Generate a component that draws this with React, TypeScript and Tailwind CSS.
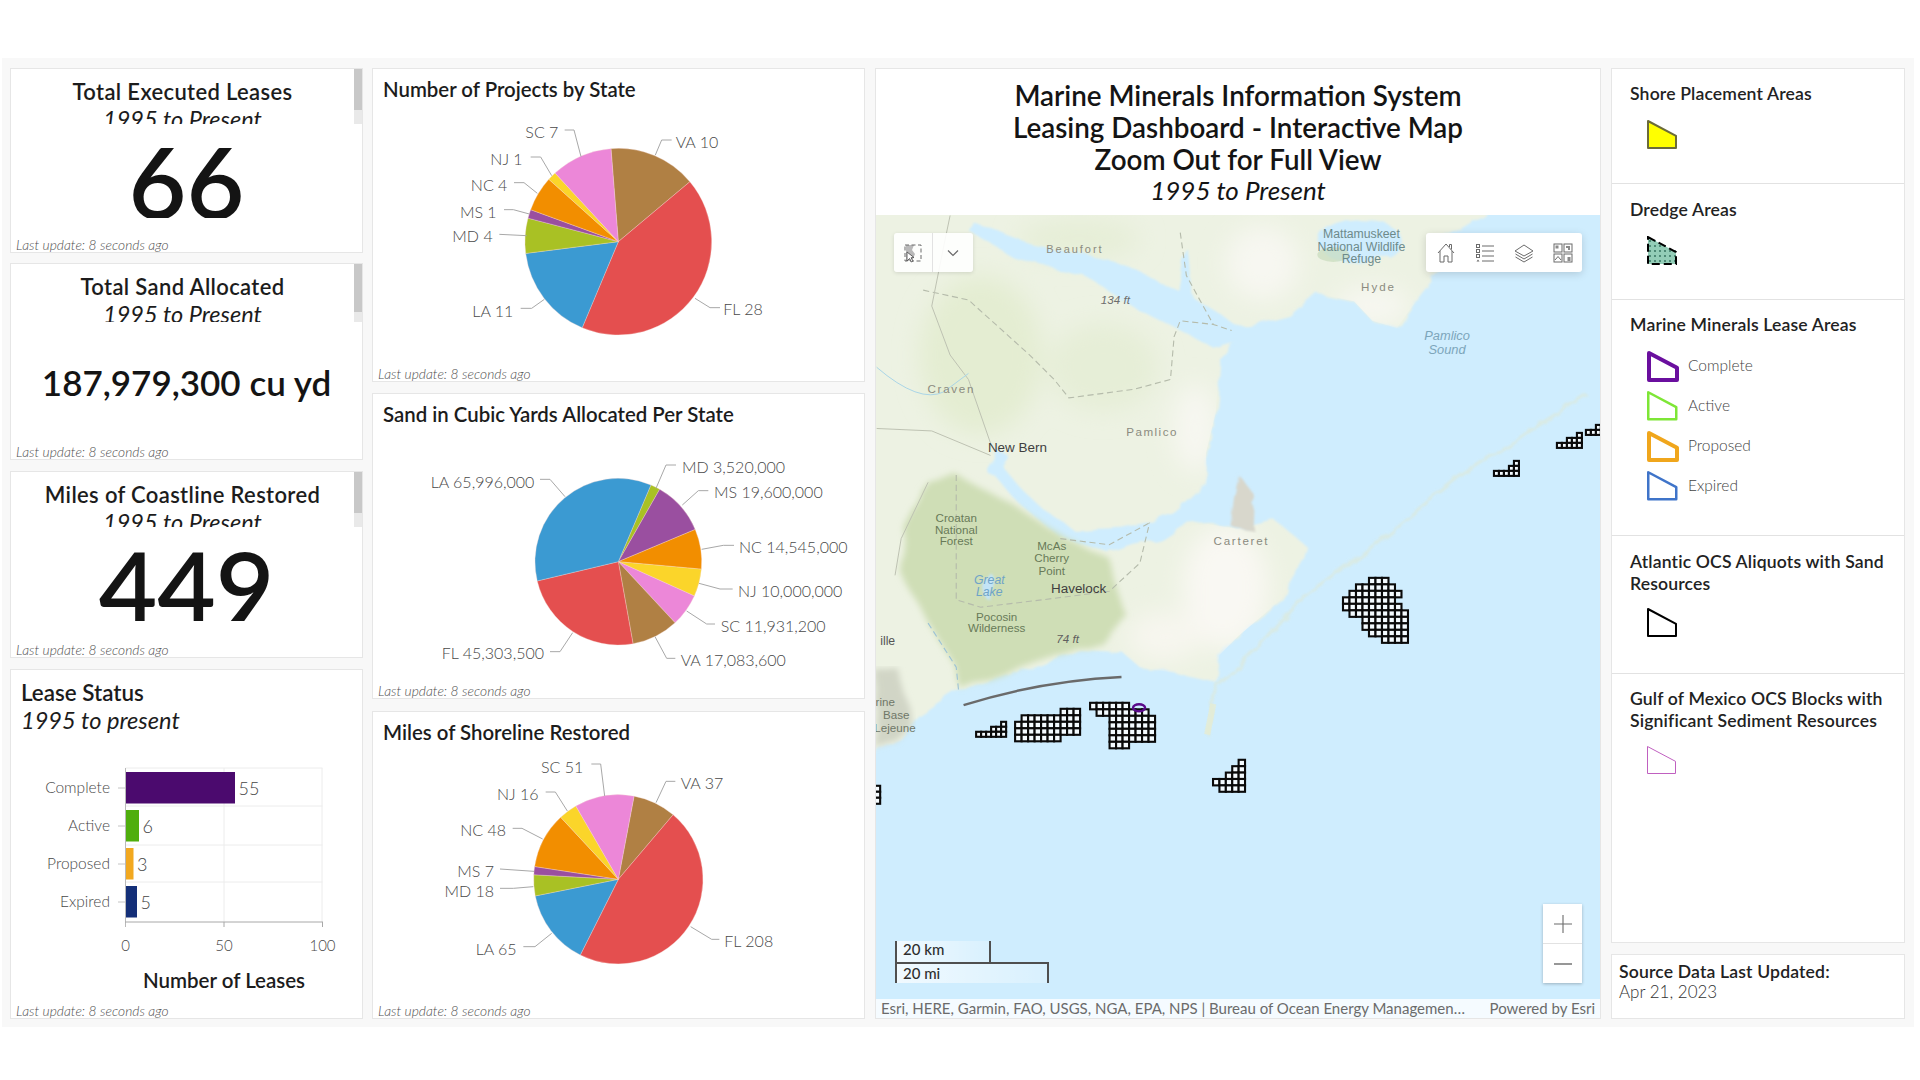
import React from "react";

type Slice = { v: number; c: string };
type Lbl = { t: string; x: number; y: number; a: "start" | "end"; p: string };

const C = { VA: "#b08044", FL: "#e44f4f", LA: "#3b9ad2", MD: "#a9c124", MS: "#9a4fa0", NC: "#f28e00", NJ: "#fbd52a", SC: "#ec87d8" };

function slicePaths(cx: number, cy: number, r: number, start: number, data: Slice[]) {
  const total = data.reduce((s, d) => s + d.v, 0);
  let a = start;
  return data.map((d, i) => {
    const b = a + (d.v / total) * 360;
    const p = (deg: number) => {
      const rad = (deg * Math.PI) / 180;
      return `${(cx + r * Math.sin(rad)).toFixed(1)} ${(cy - r * Math.cos(rad)).toFixed(1)}`;
    };
    const path = `M${cx} ${cy} L${p(a)} A${r} ${r} 0 ${b - a > 180 ? 1 : 0} 1 ${p(b)} Z`;
    a = b;
    return <path key={i} d={path} fill={d.c} stroke="#f7d9d0" strokeWidth="1" />;
  });
}

function Footer() {
  return <div className="h-[16px] pl-[5px] text-[13.8px] leading-[18px] italic font-light text-[#4f4f4f] shrink-0 whitespace-nowrap">Last update: 8 seconds ago</div>;
}

function PieCard({ title, h, svgH, vy, cx, cy, r, start, data, labels }: { title: string; h: string; svgH: number; vy: number; cx: number; cy: number; r: number; start: number; data: Slice[]; labels: Lbl[] }) {
  return (
    <div className={`${h} bg-white border border-[#e6e6e6] flex flex-col overflow-hidden`}>
      <div className="h-[40px] pl-[10px] flex items-center text-[20.4px] font-semibold text-[#1c1c1c] shrink-0 whitespace-nowrap">{title}</div>
      <svg width={491} height={svgH} viewBox={`9 ${vy} 1473 ${svgH * 3}`} className="block shrink-0">
        {slicePaths(cx, cy, r, start, data)}
        {labels.map((l, i) => (
          <g key={i}>
            <polyline points={l.p} fill="none" stroke="#a8a8a8" strokeWidth="3" />
            <text x={l.x} y={l.y + 16} textAnchor={l.a} fontSize="48" fill="#484848" fontWeight="300">{l.t}</text>
          </g>
        ))}
      </svg>
      <Footer />
    </div>
  );
}

function StatCard({ h, title, headH, thumbH, valueClass, boxH, boxTop, value }: { h: string; title: string; headH: string; thumbH: string; valueClass: string; boxH: string; boxTop: string; value: string }) {
  return (
    <div className={`${h} bg-white border border-[#e6e6e6] flex flex-col overflow-hidden`}>
      <div className={`${headH} flex shrink-0`}>
        <div className="flex-1 overflow-hidden text-center text-[#1c1c1c] pt-[10px]">
          <div className="text-[22px] leading-[26px] font-semibold tracking-[0.35px] whitespace-nowrap">{title}</div>
          <div className="text-[23.5px] leading-[29px] italic font-normal">1995 to Present</div>
        </div>
        <div className="w-[8px] bg-[#e9e9e9]">
          <div className={`${thumbH} bg-[#c8c8c8]`} />
        </div>
      </div>
      <div className={`${boxTop} ${boxH} overflow-hidden shrink-0 flex items-center justify-center`}>
        <div className={`${valueClass} text-[#141414] whitespace-nowrap`}>{value}</div>
      </div>
      <div className="flex-1" />
      <Footer />
    </div>
  );
}

function LegendShape({ stroke, sw, fill, dash, w = 28, h = 27 }: { stroke: string; sw: number; fill: string; dash?: string; w?: number; h?: number }) {
  return (
    <svg width={w + sw} height={h + sw} className="block shrink-0">
      <polygon points={`${sw / 2},${sw / 2} ${w + sw / 2},${h * 0.55 + sw / 2} ${w + sw / 2},${h + sw / 2} ${sw / 2},${h + sw / 2}`} fill={fill} stroke={stroke} strokeWidth={sw} strokeLinejoin="round" strokeDasharray={dash} />
    </svg>
  );
}

function DredgeShape() {
  const dots: React.ReactNode[] = [];
  for (let y = 4; y < 27; y += 5) for (let x = 2; x < 28; x += 5) if (y > x * 0.55 - 1) dots.push(<circle key={`${x}-${y}`} cx={x + 1} cy={y + 1} r="0.9" fill="#2d6a58" />);
  return (
    <svg width={30} height={29} className="block shrink-0">
      <polygon points="1,1 29,16 29,28 1,28" fill="#93cdb7" />
      {dots}
      <polygon points="1,1 29,16 29,28 1,28" fill="none" stroke="#000" strokeWidth="2" strokeDasharray="8 4" />
    </svg>
  );
}

function Cells({ x, y, p, rows }: { x: number; y: number; p: number; rows: [number, number][] }) {
  const out: React.ReactNode[] = [];
  rows.forEach((r, ry) => {
    for (let i = 0; i < r[1]; i++) out.push(<rect key={`${ry}-${i}`} x={x + (r[0] + i) * p} y={y + ry * p} width={p} height={p} fill="#f4fbff" stroke="#0a0a0a" strokeWidth="2.1" />);
  });
  return <g>{out}</g>;
}

function MapLabel({ x, y, t, c = "#8b8b80", s = 9.6, ls = 0, i = false, w = 400 }: { x: number; y: number; t: string; c?: string; s?: number; ls?: number; i?: boolean; w?: number }) {
  return <text x={x} y={y} textAnchor="middle" fontFamily="'Liberation Sans',sans-serif" fontSize={s} fill={c} letterSpacing={ls} fontStyle={i ? "italic" : "normal"} fontWeight={w}>{t}</text>;
}

function MapDrawing() {
  const land = "M700,160 L1212,160 L1212,175 L1190,188 L1165,200 L1175,222 L1160,240 L1140,268 L1120,262 L1105,246 L1075,240 L1053,259 L1010,270 L995,294 L992,337 L984,370 L985,395 L962,416 L935,427 L915,431 L876,433 L850,415 L834,400 L815,378 L808,385 L830,410 L865,440 L905,452 L925,445 L950,440 L965,430 L985,428 L1010,432 L1040,425 L1065,445 L1060,465 L1045,490 L1030,503 L1010,520 L995,535 L992,557 L960,550 L930,545 L915,532 L880,530 L842,545 L784,563 L750,585 L738,600 L700,620 Z";
  return (
    <svg width={726} height={803} viewBox="714.6 175.6 592.8 656" className="block absolute inset-0">
      <defs>
        <filter id="soft" x="-20%" y="-20%" width="140%" height="140%"><feGaussianBlur stdDeviation="10" /></filter>
        <filter id="rough" x="-5%" y="-5%" width="110%" height="110%">
          <feTurbulence type="fractalNoise" baseFrequency="0.05" numOctaves="3" seed="4" />
          <feDisplacementMap in="SourceGraphic" scale="9" />
          <feGaussianBlur stdDeviation="0.7" />
        </filter>
        <filter id="rough2" x="-5%" y="-5%" width="110%" height="110%">
          <feTurbulence type="fractalNoise" baseFrequency="0.03" numOctaves="2" seed="8" />
          <feDisplacementMap in="SourceGraphic" scale="9" />
          <feGaussianBlur stdDeviation="2.5" />
        </filter>
        <clipPath id="landclip"><path d={land} /></clipPath>
      </defs>
      <rect x="714" y="175" width="594" height="660" fill="#cfedfe" />
      <g filter="url(#rough)">
        <path d={land} fill="#edf2e3" />
      </g>
      <g clipPath="url(#landclip)">
        <g filter="url(#soft)">
          <ellipse cx="800" cy="290" rx="50" ry="65" fill="#e4edd2" />
          <ellipse cx="900" cy="300" rx="45" ry="36" fill="#e6eed7" />
          <ellipse cx="880" cy="195" rx="50" ry="16" fill="#e6eed7" />
          <ellipse cx="1030" cy="215" rx="30" ry="30" fill="#f7f7f1" />
          <ellipse cx="1120" cy="250" rx="30" ry="16" fill="#f7f7f1" />
          <ellipse cx="975" cy="350" rx="18" ry="36" fill="#f7f7f1" />
          <ellipse cx="1000" cy="480" rx="35" ry="50" fill="#f9f8f3" />
          <ellipse cx="950" cy="520" rx="30" ry="20" fill="#f7f6ef" />
        </g>
      </g>
      <path d="M738,430 L757,394 L780,388 L830,415 L869,439 L903,454 L919,503 L900,527 L880,530 L846,541 L784,563 L780,545 L757,509 L734,467 Z" fill="#cfdeb6" filter="url(#rough2)" />
      <path d="M715,548 L734,548 L738,569 L745,594 L738,600 L715,612 Z" fill="#d1d5c6" filter="url(#rough2)" />
      <path d="M1011,388 L1024,405 L1023,433 L1004,430 L1007,406 Z" fill="#d8d7cc" filter="url(#rough)" />
      <g fill="#cfedfe" filter="url(#rough)">
        <path d="M795,183 L842,200 L907,212 L968,240 L1004,262 L1030,272 L990,284 L927,252 L884,225 L830,212 L792,190 Z" />
        <path d="M960,245 L966,210 L971,205 L974,245 Z" />
        <ellipse cx="1110" cy="197" rx="34" ry="18" />
        <ellipse cx="807" cy="479" rx="5" ry="11" fill="#c3e4f7" />
        <path d="M804,385 L814,368 L824,374 L815,385 Z" />
      </g>
      <ellipse cx="1088" cy="208" rx="13" ry="6" fill="#c7dcbc" opacity="0.7" />
      <g fill="none" stroke="#b5bbab" strokeWidth="0.9" strokeDasharray="5 3">
        <path d="M753,237 L790,245 L840,290 L860,310 L872,325 L925,318 L955,310 L958,275 L963,262 L990,265 L1005,270" />
        <path d="M963,190 L968,225 L990,265" />
        <path d="M780,388 L780,490 L800,496 L850,490 L905,483 L930,460 L938,427" />
        <path d="M865,440 L905,445 L938,427" />
        <path d="M757,509 L780,545 L782,565" stroke="#9cc2d6" />
      </g>
      <g fill="none" stroke="#bcc1b1" strokeWidth="0.8">
        <path d="M775,176 L770,200 L760,250 L775,290 L790,310 L808,362" />
        <path d="M715,350 L760,352 L808,372" />
        <path d="M757,394 L735,440 L730,470" />
        <path d="M715,300 Q750,330 770,320 L790,305" stroke="#a8d4e6" />
      </g>
      <path d="M1295,322 L1190,390 L1115,450 L1060,490 L1025,530 L992,560 L985,600" fill="none" stroke="#dfe9d6" strokeWidth="2.5" opacity="0.65" filter="url(#rough)" />
      <path d="M990,575 L985,600" stroke="#e8edcf" strokeWidth="5" fill="none" opacity="0.7" />
      <path d="M786,576 Q850,556 915,553" fill="none" stroke="#6a6a6a" strokeWidth="2" />

      <MapLabel x={877} y={207} t="Beaufort" ls={1.6} s={9} />
      <MapLabel x={910} y={248} t="134 ft" i c="#6e6e6e" s={9.5} />
      <MapLabel x={1111} y={194} t="Mattamuskeet" c="#6d8a8a" s={10} />
      <MapLabel x={1111} y={205} t="National Wildlife" c="#6d8a8a" s={10} />
      <MapLabel x={1111} y={215} t="Refuge" c="#6d8a8a" s={10} />
      <MapLabel x={1125} y={238} t="Hyde" ls={1.6} s={9.5} />
      <MapLabel x={1181} y={278} t="Pamlico" i c="#7da6bb" s={10.5} />
      <MapLabel x={1181} y={289} t="Sound" i c="#7da6bb" s={10.5} />
      <MapLabel x={776} y={321} t="Craven" ls={1.4} s={9.5} />
      <MapLabel x={940} y={356} t="Pamlico" ls={1.2} s={9.5} />
      <MapLabel x={830} y={369} t="New Bern" c="#3f3f3f" s={11} />
      <MapLabel x={780} y={426} t="Croatan" c="#687a58" s={9.5} />
      <MapLabel x={780} y={436} t="National" c="#687a58" s={9.5} />
      <MapLabel x={780} y={445} t="Forest" c="#687a58" s={9.5} />
      <MapLabel x={858} y={449} t="McAs" c="#687a58" s={9.5} />
      <MapLabel x={858} y={459} t="Cherry" c="#687a58" s={9.5} />
      <MapLabel x={858} y={470} t="Point" c="#687a58" s={9.5} />
      <MapLabel x={880} y={484} t="Havelock" c="#3f3f3f" s={11} />
      <MapLabel x={807} y={477} t="Great" i c="#6ea3c8" s={10} />
      <MapLabel x={807} y={487} t="Lake" i c="#6ea3c8" s={10} />
      <MapLabel x={813} y={507} t="Pocosin" c="#687a58" s={9.5} />
      <MapLabel x={813} y={516} t="Wilderness" c="#687a58" s={9.5} />
      <MapLabel x={871} y={525} t="74 ft" i c="#5f5f5f" s={9.5} />
      <MapLabel x={1013} y={445} t="Carteret" ls={1.4} s={9.5} />
      <MapLabel x={724} y={527} t="ille" c="#555" s={10} />
      <MapLabel x={722} y={577} t="rine" c="#6f7768" s={9.5} />
      <MapLabel x={731} y={587} t="Base" c="#6f7768" s={9.5} />
      <MapLabel x={730} y={598} t="Lejeune" c="#6f7768" s={9.5} />

      <g transform="scale(0.81666)">
        <Cells x={975} y={722} p={5} rows={[[5, 1], [3, 3], [0, 6]]} />
        <Cells x={1014} y={709} p={6.5} rows={[[7, 3], [1, 9], [0, 10], [0, 10], [0, 7]]} />
        <Cells x={1089} y={703} p={6.5} rows={[[0, 6], [1, 8], [3, 7], [3, 7], [3, 7], [3, 7], [3, 3]]} />
        <ellipse cx="1138" cy="708" rx="6" ry="3.5" fill="none" stroke="#5a0a8a" strokeWidth="2.4" />
        <Cells x={1212} y={760} p={6.4} rows={[[4, 1], [3, 2], [2, 3], [0, 5], [1, 4]]} />
        <Cells x={1342} y={578} p={6.5} rows={[[4, 3], [2, 6], [1, 8], [0, 8], [0, 9], [1, 9], [3, 7], [3, 7], [4, 6], [6, 4]]} />
        <Cells x={1493} y={461} p={5} rows={[[4, 1], [3, 2], [0, 5]]} />
        <Cells x={1556} y={433} p={5} rows={[[4, 1], [2, 3], [0, 5]]} />
        <Cells x={1585} y={425} p={5} rows={[[2, 2], [0, 4]]} />
        <Cells x={873} y={786} p={6} rows={[[0, 1], [0, 1], [0, 1]]} />
      </g>
    </svg>
  );
}

const ic = { fill: "none", stroke: "#6b6b6b", strokeWidth: 1 };

function MapWidgets() {
  return (
    <>
      <div className="absolute left-[18px] top-[18px] w-[79px] h-[39px] bg-white/90 rounded-[3px] flex shadow-[0_1px_4px_rgba(0,0,0,0.12)]">
        <div className="w-[39px] flex items-center justify-center border-r border-[#e2e2e2]">
          <svg width="20" height="20" viewBox="0 0 20 20">
            <path d="M3 2 H11 L9 7 L12 11 L9 18 H3 Z" fill="#b9b9b9" />
            <path d="M2 2 H18 V18 H2 Z" {...ic} strokeDasharray="4 2.5" />
            <path d="M4 9 L4 18 L6.5 15.5 L8.5 19 L10 18 L8 14.8 L11 14.5 Z" fill="#fff" stroke="#555" strokeWidth="0.9" />
          </svg>
        </div>
        <div className="flex-1 flex items-center justify-center">
          <svg width="14" height="14" viewBox="0 0 14 14"><path d="M2 4.5 L7 9.5 L12 4.5" {...ic} strokeWidth="1.2" /></svg>
        </div>
      </div>
      <div className="absolute left-[550px] top-[18px] w-[156px] h-[39px] bg-white rounded-[3px] flex items-center shadow-[0_2px_8px_rgba(0,0,0,0.15)]">
        <div className="w-[39px] flex justify-center">
          <svg width="20" height="22" viewBox="0 0 20 22">
            <path d="M2 11 L10 2 L18 11 M4 9 V20 H8 V14 H12 V20 H16 V9 M13.5 5 V2.5 H15.5 V7.5" {...ic} />
          </svg>
        </div>
        <div className="w-[39px] flex justify-center">
          <svg width="20" height="20" viewBox="0 0 20 20">
            <rect x="1.5" y="1.5" width="3" height="3" {...ic} /><rect x="1.5" y="6.5" width="3" height="3" {...ic} /><rect x="1.5" y="11.5" width="3" height="3" {...ic} />
            <path d="M1.5 18.5 L3 16.5 L4.5 18.5 Z" fill="#6b6b6b" />
            <path d="M7 3 H19 M7 8 H19 M7 13 H19 M7 18 H19" {...ic} />
          </svg>
        </div>
        <div className="w-[39px] flex justify-center">
          <svg width="20" height="20" viewBox="0 0 20 20">
            <path d="M10 2 L19 8 L10 13 L1 8 Z" {...ic} /><path d="M1.5 11 L10 16 L18.5 11" {...ic} /><path d="M1.5 14 L10 19 L18.5 14" {...ic} />
          </svg>
        </div>
        <div className="w-[39px] flex justify-center">
          <svg width="20" height="20" viewBox="0 0 20 20">
            <rect x="1" y="1" width="8" height="8" {...ic} /><rect x="11" y="1" width="8" height="8" {...ic} /><rect x="1" y="11" width="8" height="8" {...ic} /><rect x="11" y="11" width="8" height="8" {...ic} />
            <rect x="2.5" y="2.5" width="3" height="3" fill="#8a8a8a" /><path d="M13 3 H17 V7 H15 V5 H13 Z" fill="#8a8a8a" /><path d="M2 17 L5 13.5 L8 17" {...ic} /><rect x="14.5" y="14" width="3" height="4" fill="#8a8a8a" />
          </svg>
        </div>
      </div>
      <div className="absolute left-[667px] top-[689px] w-[39px] h-[79px] bg-white flex flex-col shadow-[0_1px_3px_rgba(0,0,0,0.25)]">
        <div className="h-[40px] flex items-center justify-center border-b border-[#e2e2e2]">
          <svg width="20" height="20" viewBox="0 0 20 20"><path d="M10 1 V19 M1 10 H19" {...ic} strokeWidth="1.1" /></svg>
        </div>
        <div className="flex-1 flex items-center justify-center">
          <svg width="20" height="20" viewBox="0 0 20 20"><path d="M1 10 H19" {...ic} strokeWidth="1.4" /></svg>
        </div>
      </div>
      <div className="absolute left-[19px] top-[726px] text-[15px] font-medium text-[#2e2e2e]">
        <div className="w-[96px] h-[21px] border-l-2 border-r-2 border-[#4f4f4f] pl-[6px] leading-[17px] bg-gradient-to-r from-white/70 to-white/20">20 km</div>
        <div className="w-[154px] h-[21px] border-l-2 border-r-2 border-t-2 border-[#4f4f4f] pl-[6px] leading-[18px] bg-gradient-to-r from-white/70 to-white/20">20 mi</div>
      </div>
      <div className="absolute left-0 right-0 bottom-0 h-[19px] bg-white/80 flex justify-between items-center px-[5px] text-[15px] text-[#6b6b6b] font-normal whitespace-nowrap">
        <span>Esri, HERE, Garmin, FAO, USGS, NGA, EPA, NPS | Bureau of Ocean Energy Managemen…</span>
        <span>Powered by Esri</span>
      </div>
    </>
  );
}

function LeaseChart() {
  const rows = [
    { l: "Complete", y: 772, w: 109, c: "#4b0a6e", v: "55", ly: 788 },
    { l: "Active", y: 810, w: 13, c: "#4fae0d", v: "6", ly: 826 },
    { l: "Proposed", y: 848, w: 7.5, c: "#f2a81f", v: "3", ly: 864 },
    { l: "Expired", y: 886, w: 11, c: "#142f78", v: "5", ly: 902 },
  ];
  return (
    <svg width={351} height={266} viewBox="11 736 351 266" className="block shrink-0">
      {[768, 806, 845, 882].map((y) => <line key={y} x1="125.5" x2="322.5" y1={y} y2={y} stroke="#ececec" />)}
      {[224, 322].map((x) => <line key={x} x1={x} x2={x} y1="768" y2="922" stroke="#ececec" />)}
      {rows.map((r) => (
        <g key={r.l}>
          <line x1="118" x2="125" y1={r.ly} y2={r.ly} stroke="#c4c4c4" />
          <rect x="126" y={r.y} width={r.w} height="31.5" fill={r.c} />
          <text x="110" y={r.ly + 5} textAnchor="end" fontSize="15.5" fontWeight="300" fill="#484848">{r.l}</text>
          <text x={126 + r.w + 3.5} y={r.ly + 7} fontSize="18" fontWeight="300" fill="#444">{r.v}</text>
        </g>
      ))}
      <line x1="125.5" x2="125.5" y1="768" y2="927" stroke="#b9b9b9" />
      <line x1="125" x2="323" y1="922" y2="922" stroke="#a8a8a8" />
      <line x1="224" x2="224" y1="922" y2="927" stroke="#a8a8a8" />
      <line x1="322.5" x2="322.5" y1="922" y2="927" stroke="#a8a8a8" />
      {[["0", 125.5], ["50", 224], ["100", 322.5]].map(([t, x]) => <text key={String(t)} x={x as number} y="951" textAnchor="middle" fontSize="15" fontWeight="300" fill="#484848">{t}</text>)}
      <text x="224" y="988" textAnchor="middle" fontSize="20.5" fontWeight="600" fill="#1c1c1c">Number of Leases</text>
    </svg>
  );
}

const d1: Slice[] = [{ v: 10, c: C.VA }, { v: 28, c: C.FL }, { v: 11, c: C.LA }, { v: 4, c: C.MD }, { v: 1, c: C.MS }, { v: 4, c: C.NC }, { v: 1, c: C.NJ }, { v: 7, c: C.SC }];
const d2: Slice[] = [{ v: 3.52, c: C.MD }, { v: 19.6, c: C.MS }, { v: 14.545, c: C.NC }, { v: 10, c: C.NJ }, { v: 11.93, c: C.SC }, { v: 17.08, c: C.VA }, { v: 45.3, c: C.FL }, { v: 66, c: C.LA }];
const d3: Slice[] = [{ v: 37, c: C.VA }, { v: 208, c: C.FL }, { v: 65, c: C.LA }, { v: 18, c: C.MD }, { v: 7, c: C.MS }, { v: 48, c: C.NC }, { v: 16, c: C.NJ }, { v: 51, c: C.SC }];

const l1: Lbl[] = [
  { t: "VA 10", x: 917, y: 247, a: "start", p: "856,285 875,240 905,240" },
  { t: "FL 28", x: 1060, y: 750, a: "start", p: "975,715 1020,743 1050,743" },
  { t: "LA 11", x: 430, y: 755, a: "end", p: "523,718 485,745 452,745" },
  { t: "MD 4", x: 368, y: 531, a: "end", p: "470,527 388,523" },
  { t: "MS 1", x: 380, y: 457, a: "end", p: "478,462 430,449 402,449" },
  { t: "NC 4", x: 412, y: 376, a: "end", p: "502,400 462,368 432,368" },
  { t: "NJ 1", x: 458, y: 298, a: "end", p: "545,347 512,291 482,291" },
  { t: "SC 7", x: 565, y: 218, a: "end", p: "633,290 612,210 584,210" },
];
const l2: Lbl[] = [
  { t: "MD 3,520,000", x: 936, y: 233, a: "start", p: "858,295 888,225 918,225" },
  { t: "MS 19,600,000", x: 1032, y: 308, a: "start", p: "937,345 985,302 1015,302" },
  { t: "NC 14,545,000", x: 1107, y: 473, a: "start", p: "995,478 1060,466 1092,466" },
  { t: "NJ 10,000,000", x: 1104, y: 604, a: "start", p: "987,580 1050,597 1088,597" },
  { t: "SC 11,931,200", x: 1052, y: 709, a: "start", p: "950,663 1010,702 1035,702" },
  { t: "VA 17,083,600", x: 932, y: 811, a: "start", p: "855,740 890,805 916,805" },
  { t: "FL 45,303,500", x: 522, y: 790, a: "end", p: "608,728 570,785 540,785" },
  { t: "LA 65,996,000", x: 493, y: 277, a: "end", p: "585,320 540,268 510,268" },
];
const l3: Lbl[] = [
  { t: "SC 51", x: 640, y: 172, a: "end", p: "704,258 692,162 664,162" },
  { t: "VA 37", x: 932, y: 222, a: "start", p: "858,278 888,214 916,214" },
  { t: "NJ 16", x: 506, y: 255, a: "end", p: "592,303 556,246 527,246" },
  { t: "NC 48", x: 408, y: 363, a: "end", p: "518,387 456,355 428,355" },
  { t: "MS 7", x: 372, y: 485, a: "end", p: "492,484 390,477" },
  { t: "MD 18", x: 372, y: 544, a: "end", p: "490,530 430,535 390,535" },
  { t: "LA 65", x: 440, y: 718, a: "end", p: "545,670 495,710 460,710" },
  { t: "FL 208", x: 1063, y: 696, a: "start", p: "962,650 1025,688 1048,688" },
];

function LegendRow({ label, children }: { label: string; children: React.ReactNode }) {
  return (
    <div className="h-[40px] flex items-center pl-[35px]">
      <div className="w-[41px] shrink-0">{children}</div>
      <span className="text-[15.5px] font-light text-[#444] mt-[-1px]">{label}</span>
    </div>
  );
}

const legendTitle = "text-[17.6px] leading-[22px] font-semibold tracking-[0.15px] text-[#222]";

export default function App() {
  return (
    <div className="w-[1920px] h-[1080px] bg-white pt-[58px] pl-[2px] font-[family-name:Lato,sans-serif] overflow-hidden">
      <div className="w-[1912px] h-[969px] bg-[#f8f8f8] pt-[10px] pl-[8px] flex">
        <div className="w-[353px] flex flex-col shrink-0">
          <StatCard h="h-[185px]" title="Total Executed Leases" headH="h-[55px]" thumbH="h-[41px]" boxTop="mt-[24px]" boxH="h-[70px]" valueClass="text-[100px] leading-[70px] font-semibold mt-[-6px]" value="66" />
          <div className="h-[10px]" />
          <StatCard h="h-[197px]" title="Total Sand Allocated" headH="h-[58px]" thumbH="h-[48px]" boxTop="mt-[38px]" boxH="h-[44px]" valueClass="text-[35px] leading-[44px] font-semibold" value="187,979,300 cu yd" />
          <div className="h-[11px]" />
          <StatCard h="h-[187px]" title="Miles of Coastline Restored" headH="h-[55px]" thumbH="h-[41px]" boxTop="mt-[25px]" boxH="h-[69px]" valueClass="text-[101px] leading-[69px] font-semibold" value="449" />
          <div className="h-[11px]" />
          <div className="h-[350px] bg-white border border-[#e6e6e6] flex flex-col overflow-hidden">
            <div className="pl-[10px] pt-[10px] text-[#1c1c1c] h-[66px] shrink-0">
              <div className="text-[22.4px] leading-[26px] font-semibold">Lease Status</div>
              <div className="text-[23.6px] leading-[29px] italic font-normal">1995 to present</div>
            </div>
            <LeaseChart />
            <Footer />
          </div>
        </div>

        <div className="w-[493px] ml-[9px] flex flex-col shrink-0">
          <PieCard title="Number of Projects by State" h="h-[314px]" svgH={256} vy={147} cx={745} cy={545} r={280} start={-4.5} data={d1} labels={l1} />
          <div className="h-[11px]" />
          <PieCard title="Sand in Cubic Yards Allocated Per State" h="h-[306px]" svgH={248} vy={132} cx={745} cy={515} r={250} start={23} data={d2} labels={l2} />
          <div className="h-[12px]" />
          <PieCard title="Miles of Shoreline Restored" h="h-[308px]" svgH={250} vy={126} cx={745} cy={508} r={254} start={10.7} data={d3} labels={l3} />
        </div>

        <div className="w-[726px] ml-[10px] h-[951px] shrink-0 border border-[#e6e6e6] bg-white flex flex-col">
          <div className="h-[146px] shrink-0 pt-[11px] text-center text-[#141414]">
            <div className="text-[27.8px] leading-[32px] font-semibold">Marine Minerals Information System</div>
            <div className="text-[27.8px] leading-[32px] font-semibold">Leasing Dashboard - Interactive Map</div>
            <div className="text-[27.8px] leading-[32px] font-semibold">Zoom Out for Full View</div>
            <div className="text-[26px] leading-[29px] italic font-normal">1995 to Present</div>
          </div>
          <div className="relative flex-1 overflow-hidden bg-[#cfedfe]">
            <MapDrawing />
            <MapWidgets />
          </div>
        </div>

        <div className="w-[294px] ml-[10px] shrink-0 flex flex-col">
          <div className="h-[875px] bg-white border border-[#e6e6e6] flex flex-col">
            <div className="h-[115px] border-b border-[#e2e2e2] pl-[18px] pt-[14px] shrink-0">
              <div className={legendTitle}>Shore Placement Areas</div>
              <div className="ml-[17px] mt-[15px]"><LegendShape stroke="#6b6b3a" sw={2} fill="#ffff00" /></div>
            </div>
            <div className="h-[116px] border-b border-[#e2e2e2] pl-[18px] pt-[15px] shrink-0">
              <div className={legendTitle}>Dredge Areas</div>
              <div className="ml-[17px] mt-[15px]"><DredgeShape /></div>
            </div>
            <div className="h-[236px] border-b border-[#e2e2e2] pt-[14px] shrink-0">
              <div className={`pl-[18px] ${legendTitle}`}>Marine Minerals Lease Areas</div>
              <div className="mt-[10px]">
                <LegendRow label="Complete"><LegendShape stroke="#6a0f9e" sw={4} fill="#fff" /></LegendRow>
                <LegendRow label="Active"><LegendShape stroke="#7ee636" sw={2.5} fill="#fff" /></LegendRow>
                <LegendRow label="Proposed"><LegendShape stroke="#f0a61c" sw={4} fill="#fff" /></LegendRow>
                <LegendRow label="Expired"><LegendShape stroke="#3f74c9" sw={2.5} fill="#fff" /></LegendRow>
              </div>
            </div>
            <div className="h-[138px] border-b border-[#e2e2e2] pl-[18px] pt-[15px] shrink-0">
              <div className={legendTitle}>Atlantic OCS Aliquots with Sand Resources</div>
              <div className="ml-[17px] mt-[13px]"><LegendShape stroke="#000" sw={2} fill="#fff" /></div>
            </div>
            <div className="flex-1 pl-[18px] pt-[14px]">
              <div className={legendTitle}>Gulf of Mexico OCS Blocks with Significant Sediment Resources</div>
              <div className="ml-[17px] mt-[14px]"><LegendShape stroke="#c060c0" sw={1} fill="#fff" /></div>
            </div>
          </div>
          <div className="h-[11px]" />
          <div className="h-[65px] bg-white border border-[#e6e6e6] pl-[7px] pt-[6px]">
            <div className={legendTitle}>Source Data Last Updated:</div>
            <div className="text-[17px] leading-[18px] font-light text-[#333]">Apr 21, 2023</div>
          </div>
        </div>
      </div>
    </div>
  );
}
